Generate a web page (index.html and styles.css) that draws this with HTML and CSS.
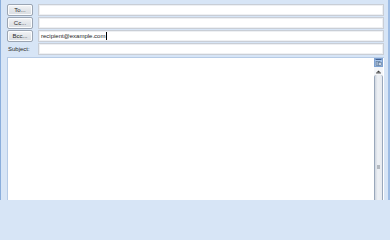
FILE: index.html
```html
<!DOCTYPE html>
<html>
<head>
<meta charset="utf-8">
<link rel="stylesheet" href="styles.css">
</head>
<body>
<div class="window">
  <div class="fields">
    <div class="row">
      <button class="btn">To...</button>
      <div class="input"></div>
    </div>
    <div class="row">
      <button class="btn">Cc...</button>
      <div class="input"></div>
    </div>
    <div class="row">
      <button class="btn">Bcc...</button>
      <div class="input">recipient@example.com<span class="caret"></span></div>
    </div>
    <div class="row">
      <span class="label">Subject:</span>
      <div class="input"></div>
    </div>
  </div>
  <div class="body">
    <div class="editor"></div>
    <div class="scrollbar">
      <div class="ruler-btn">
        <svg width="7" height="7" viewBox="0 0 7 7">
          <rect x="0.5" y="0" width="6" height="1" fill="#3f5f90"/>
          <rect x="1" y="2.5" width="4" height="4" fill="#9fb3cc" stroke="#5e7898" stroke-width="0.6"/>
          <rect x="3.5" y="3.5" width="3" height="3" fill="#c8d6e8" stroke="#5e7898" stroke-width="0.6"/>
        </svg>
      </div>
      <div class="arrow-btn">
        <svg width="7" height="5" viewBox="0 0 7 5"><path d="M1.5 3.5 L3.5 1.5 L5.5 3.5 Z" fill="#3a3a3a"/><rect x="1" y="3.6" width="5" height="0.8" fill="#3a3a3a"/></svg>
      </div>
      <div class="track">
        <div class="space"></div>
        <div class="grip"></div>
        <div class="space2"></div>
      </div>
    </div>
  </div>
</div>
</body>
</html>
```
FILE: styles.css
```css
html, body {
  margin: 0;
  padding: 0;
  width: 390px;
  height: 200px;
  overflow: hidden;
  background: #d7e5f6;
}
.window {
  box-sizing: border-box;
  width: 390px;
  height: 200px;
  display: flex;
  flex-direction: column;
  padding: 4px 4px 0 6px;
  border-left: 1px solid #8aaedc;
  border-right: 2px solid #9dbce4;
  background: #d7e5f6;
  font-family: "Liberation Sans", Arial, sans-serif;
  font-size: 6px;
  color: #1e1e1e;
}
.fields {
  display: flex;
  flex-direction: column;
  gap: 1px;
}
.row {
  display: grid;
  grid-template-columns: 26px 1fr;
  column-gap: 5px;
  height: 12px;
  align-items: stretch;
}
.btn {
  margin: 0;
  padding: 0;
  font-family: inherit;
  font-size: 6px;
  color: #2a2a2a;
  border: 1px solid #9ba5b3;
  border-radius: 2px;
  background: linear-gradient(#f4f5f7, #e3e6ea 50%, #d9dde2);
  box-shadow: inset 0 0 0 1px #fbfcfd;
  height: 12px;
}
.label {
  align-self: center;
  padding-left: 1px;
  color: #2a2a2a;
}
.input {
  box-sizing: border-box;
  background: #fff;
  border: 1px solid #c9ced6;
  box-shadow: inset 0 0 0 1px #eef0f3;
  display: flex;
  align-items: center;
  padding-left: 2px;
  white-space: nowrap;
}
.caret {
  display: inline-block;
  width: 1px;
  height: 8px;
  background: #000;
  margin-left: 1px;
}
.body {
  flex: 1;
  display: flex;
  margin-top: 2px;
  background: #fff;
  border-left: 1px solid #b6cbe6;
  border-top: 1px solid #b6cbe6;
}
.editor { flex: 1; }
.scrollbar {
  width: 9px;
  display: flex;
  flex-direction: column;
  margin-right: 1px;
}
.ruler-btn {
  height: 9px;
  background: #a9c6ec;
  border: 1px solid #7fa2d1;
  box-sizing: border-box;
  display: flex;
  align-items: center;
  justify-content: center;
}
.arrow-btn {
  height: 8px;
  display: flex;
  align-items: center;
  justify-content: center;
  background: #f4f6f9;
}
.track {
  flex: 1;
  display: flex;
  flex-direction: column;
  border-left: 1px solid #9aa8bb;
  border-right: 1px solid #9aa8bb;
  background: linear-gradient(90deg, #cfd6e0, #eef1f5 40%, #e6eaf0);
  border-top-left-radius: 2px;
  border-top-right-radius: 2px;
}
.space { height: 90px; }
.grip {
  height: 4px;
  margin: 0 2px;
  background: #b4b9c0;
}
.space2 { flex: 1; }
```
